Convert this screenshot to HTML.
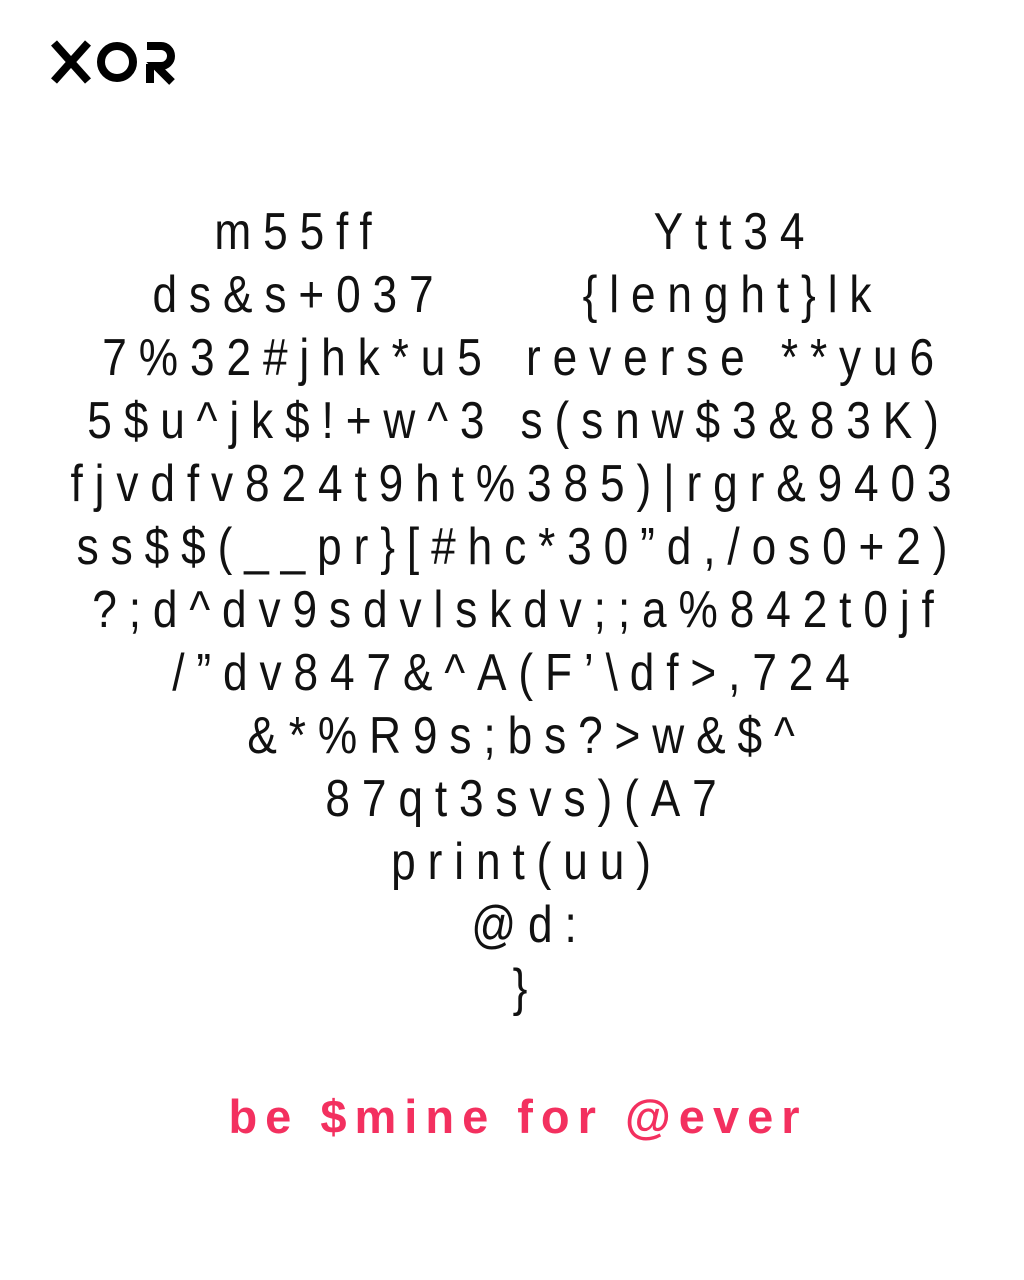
<!DOCTYPE html>
<html><head><meta charset="utf-8"><style>
html,body{margin:0;padding:0;background:#fff;}
body{width:1024px;height:1280px;position:relative;overflow:hidden;font-family:"Liberation Sans",sans-serif;color:#111;}
.l{position:absolute;font-size:52px;line-height:63px;letter-spacing:14px;white-space:pre;text-align:center;transform:translateX(-50%) scaleX(0.85);}
.p{position:absolute;left:518px;top:1087px;transform:translateX(-50%);font-size:47px;line-height:60px;font-weight:bold;color:#f3305f;letter-spacing:8px;white-space:pre;}
</style></head><body>
<svg style="position:absolute;left:50px;top:40px" width="130" height="46" viewBox="0 0 130 46">
<g fill="none" stroke="#000" stroke-width="8">
<path d="M4 3 L38 41 M38 3 L4 41"/>
<circle cx="67" cy="22" r="16"/>
</g>
<path d="M97 6 H111 A10 10 0 0 1 111 26 H106 L122 42" fill="none" stroke="#000" stroke-width="8"/>
<path d="M100 24 V43" stroke="#000" stroke-width="8"/>
</svg>
<div class="l" style="left:299px;top:201px">m55ff</div>
<div class="l" style="left:735px;top:201px">Ytt34</div>
<div class="l" style="left:299px;top:264px">ds&amp;s+037</div>
<div class="l" style="left:733px;top:264px">{lenght}lk</div>
<div class="l" style="left:298px;top:327px">7%32#jhk*u5</div>
<div class="l" style="left:736px;top:327px">reverse **yu6</div>
<div class="l" style="left:519px;top:390px">5$u^jk$!+w^3 s(snw$3&amp;83K)</div>
<div class="l" style="left:517px;top:453px">fjvdfv824t9ht%385)|rgr&amp;9403</div>
<div class="l" style="left:518px;top:516px">ss$$(__pr}[#hc*30”d,/os0+2)</div>
<div class="l" style="left:519px;top:579px">?;d^dv9sdvlskdv;;a%842t0jf</div>
<div class="l" style="left:517px;top:642px">/”dv847&amp;^A(F’\df&gt;,724</div>
<div class="l" style="left:527px;top:705px">&amp;*%R9s;bs?&gt;w&amp;$^</div>
<div class="l" style="left:527px;top:768px">87qt3svs)(A7</div>
<div class="l" style="left:527px;top:831px">print(uu)</div>
<div class="l" style="left:530px;top:894px">@d:</div>
<div class="l" style="left:526px;top:957px">}</div>
<div class="p">be $mine for @ever</div>
</body></html>
